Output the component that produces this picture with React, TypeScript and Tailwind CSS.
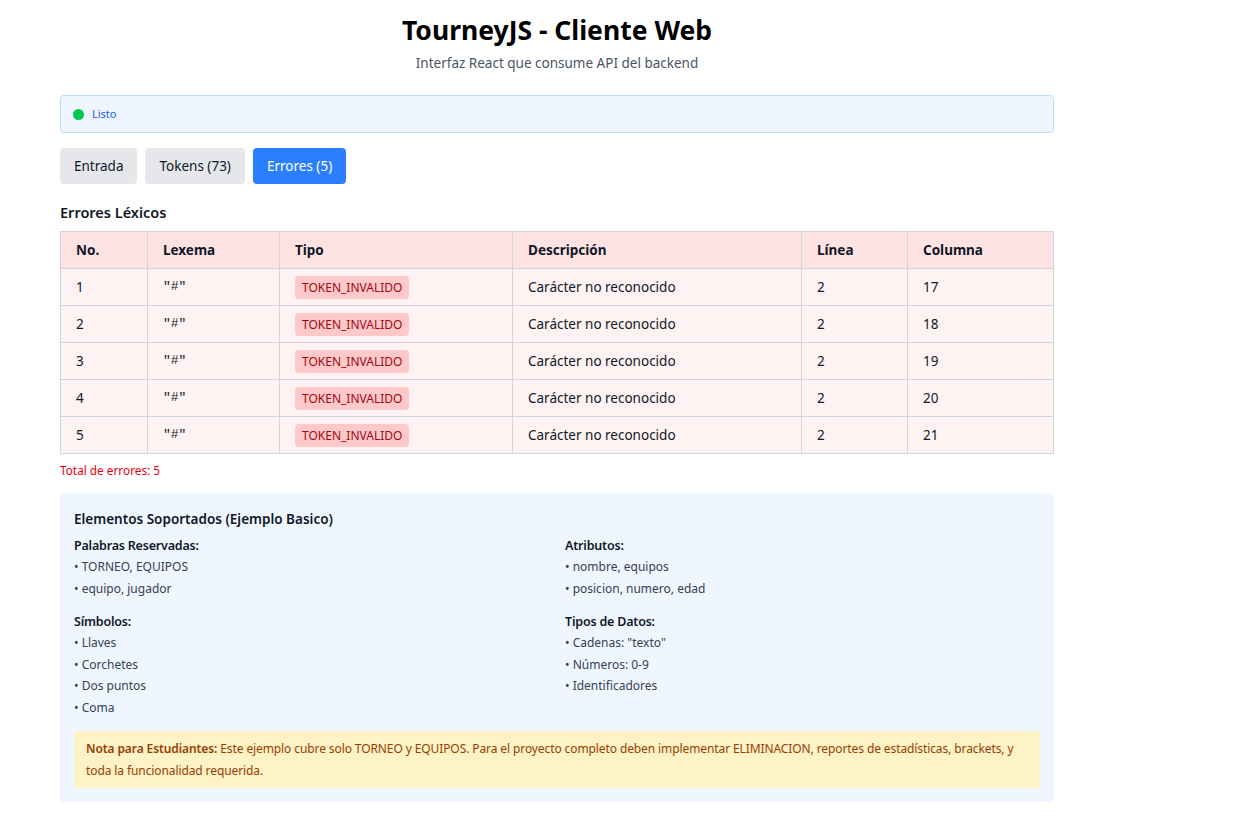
import React from "react";

const errores = [
  { no: 1, lexema: '"#"', tipo: "TOKEN_INVALIDO", desc: "Carácter no reconocido", linea: 2, col: 17 },
  { no: 2, lexema: '"#"', tipo: "TOKEN_INVALIDO", desc: "Carácter no reconocido", linea: 2, col: 18 },
  { no: 3, lexema: '"#"', tipo: "TOKEN_INVALIDO", desc: "Carácter no reconocido", linea: 2, col: 19 },
  { no: 4, lexema: '"#"', tipo: "TOKEN_INVALIDO", desc: "Carácter no reconocido", linea: 2, col: 20 },
  { no: 5, lexema: '"#"', tipo: "TOKEN_INVALIDO", desc: "Carácter no reconocido", linea: 2, col: 21 },
];

const Section = ({ title, items }: { title: string; items: string[] }) => (
  <div className="mb-[13px]">
    <h4 className="text-[12.5px] font-semibold tracking-[-0.2px] text-gray-900 leading-[20px]">{title}</h4>
    <ul className="text-[12px] text-gray-700 leading-[21.5px]">
      {items.map((it, i) => (
        <li key={i}>• {it}</li>
      ))}
    </ul>
  </div>
);

export default function App() {
  return (
    <div
      className="min-h-screen bg-white text-gray-900"
      style={{ fontFamily: '"Segoe UI", "Noto Sans", sans-serif' }}
    >
      <div className="ml-[60px] w-[994px] pt-[13px]">
        {/* Header */}
        <div className="text-center">
          <h1 className="text-[26.5px] font-bold leading-[34px] text-black">TourneyJS - Cliente Web</h1>
          <p className="text-[13.5px] text-gray-600 mt-[6px] leading-[20px]">
            Interfaz React que consume API del backend
          </p>
        </div>

        {/* Status */}
        <div className="mt-[22px] h-[38px] flex items-center gap-[8px] px-[12px] bg-blue-50 border border-blue-200 rounded">
          <span className="w-[11px] h-[11px] rounded-full bg-green-500" />
          <span className="text-[11px] text-blue-600">Listo</span>
        </div>

        {/* Tabs */}
        <div className="mt-[15px] flex gap-[8px]">
          <button className="h-[36px] px-[14px] rounded bg-gray-200 text-[13.5px] text-gray-900">Entrada</button>
          <button className="h-[36px] px-[14px] rounded bg-gray-200 text-[13.5px] text-gray-900">Tokens (73)</button>
          <button className="h-[36px] px-[14px] rounded bg-blue-500 text-[13.5px] text-white">Errores (5)</button>
        </div>

        {/* Errors */}
        <h3 className="mt-[18px] text-[14.5px] font-semibold leading-[20px]">Errores Léxicos</h3>
        <table className="mt-[9px] w-full border-collapse text-[13.5px]">
          <thead>
            <tr className="bg-red-100 h-[37px]">
              <th className="w-[87px] border border-gray-300 px-[15px] text-left font-bold">No.</th>
              <th className="w-[132px] border border-gray-300 px-[15px] text-left font-bold">Lexema</th>
              <th className="w-[233px] border border-gray-300 px-[15px] text-left font-bold">Tipo</th>
              <th className="w-[289px] border border-gray-300 px-[15px] text-left font-bold">Descripción</th>
              <th className="w-[106px] border border-gray-300 px-[15px] text-left font-bold">Línea</th>
              <th className="border border-gray-300 px-[15px] text-left font-bold">Columna</th>
            </tr>
          </thead>
          <tbody>
            {errores.map((e) => (
              <tr key={e.no} className="bg-red-50 h-[37px]">
                <td className="border border-gray-300 px-[15px]">{e.no}</td>
                <td className="border border-gray-300 px-[15px] font-mono text-[13px]">{e.lexema}</td>
                <td className="border border-gray-300 px-[15px]">
                  <span className="inline-block px-[7px] py-[2px] rounded bg-red-200 text-red-800 text-[12px] leading-[19px]">
                    {e.tipo}
                  </span>
                </td>
                <td className="border border-gray-300 px-[15px]">{e.desc}</td>
                <td className="border border-gray-300 px-[15px]">{e.linea}</td>
                <td className="border border-gray-300 px-[15px]">{e.col}</td>
              </tr>
            ))}
          </tbody>
        </table>
        <p className="mt-[7px] text-[11.8px] text-red-600 leading-[18px]">Total de errores: 5</p>

        {/* Supported elements */}
        <div className="mt-[14px] bg-blue-50 rounded px-[14px] pt-[16px] pb-[14px]">
          <h3 className="text-[13.5px] font-semibold leading-[20px] mb-[7px]">Elementos Soportados (Ejemplo Basico)</h3>
          <div className="grid grid-cols-2 gap-x-[16px]">
            <div>
              <Section title="Palabras Reservadas:" items={["TORNEO, EQUIPOS", "equipo, jugador"]} />
              <Section title="Símbolos:" items={["Llaves", "Corchetes", "Dos puntos", "Coma"]} />
            </div>
            <div>
              <Section title="Atributos:" items={["nombre, equipos", "posicion, numero, edad"]} />
              <Section title="Tipos de Datos:" items={['Cadenas: "texto"', "Números: 0-9", "Identificadores"]} />
            </div>
          </div>
          <div className="bg-amber-100 rounded px-[12px] pt-[7px] pb-[6px] text-[12px] tracking-[-0.1px] leading-[22px] text-amber-800">
            <strong className="font-semibold">Nota para Estudiantes:</strong> Este ejemplo cubre solo TORNEO y EQUIPOS.
            Para el proyecto completo deben implementar ELIMINACION, reportes de estadísticas, brackets, y toda la
            funcionalidad requerida.
          </div>
        </div>
      </div>
    </div>
  );
}
